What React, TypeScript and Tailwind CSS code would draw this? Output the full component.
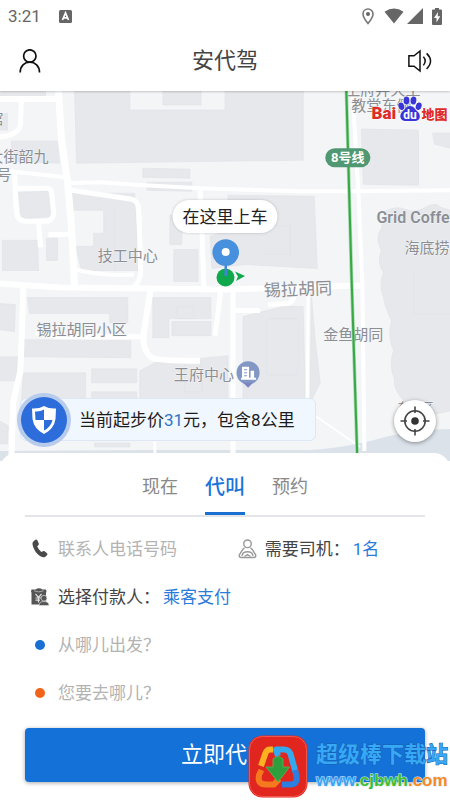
// src/App.tsx
import { useState } from 'react';

interface Building {
  id: string;
  points: string;
}

interface MapLabel {
  id: string;
  text: string;
  x: number;
  y: number;
  size: number;
  rotate?: number;
  bold?: boolean;
}

const buildings: Building[] = [
  { id: 'b1', points: '75,91 130,91 130,110 225,110 225,91 303,91 303,160 77,163' },
  { id: 'b2', points: '163,91 201,91 201,105 163,105' },
  { id: 'b3', points: '0,91 46,91 46,96 0,96' },
  { id: 'b4', points: '12,141 58,141 60,163 12,161' },
  { id: 'b5', points: '0,115 8,113 8,130 0,130' },
  { id: 'b6', points: '143,168 190,169 190,178 143,177' },
  { id: 'b7', points: '147,182 192,182 192,191 147,190' },
  { id: 'b8', points: '19,192 50,191 53,216 22,219' },
  { id: 'b9', points: '72,193 135,193 135,204 140,270 82,270 76,246 94,246 94,233 104,233 104,210 73,210' },
  { id: 'b10', points: '3,240 38,240 39,270 3,270' },
  { id: 'b11', points: '47,238 58,238 58,260 47,260' },
  { id: 'b12', points: '170,215 182,215 182,244 170,244' },
  { id: 'b13', points: '174,249 198,249 198,281 174,281' },
  { id: 'b14', points: '228,195 314,196 317,268 245,264 212,268 210,236 228,230' },
  { id: 'b15', points: '361,129 418,130 418,185 363,184' },
  { id: 'b16', points: '432,133 450,133 450,148 434,144' },
  { id: 'b17', points: '0,303 16,304 15,331 0,329' },
  { id: 'b18', points: '28,297 128,297 128,322 110,322 110,313 30,313' },
  { id: 'b19', points: '24,339 131,340 131,357 24,356' },
  { id: 'b20', points: '0,356 18,356 17,380 0,380' },
  { id: 'b21', points: '24,372 86,372 86,400 22,400' },
  { id: 'b22', points: '92,368 137,368 137,382 92,382' },
  { id: 'b23', points: '92,391 137,391 137,400 92,400' },
  { id: 'b24', points: '140,370 155,362 228,355 228,400 140,400' },
  { id: 'b25', points: '153,297 211,297 211,318 169,318 169,337 153,337' },
  { id: 'b26', points: '172,321 211,321 211,335 172,335' },
  { id: 'b27', points: '243,316 283,306 303,306 305,398 243,398' },
  { id: 'b28', points: '311,292 315,340 320,382 312,398 310,398' },
  { id: 'b29', points: '95,442 130,442 130,446 95,446' },
  { id: 'b30', points: '0,420 9,425 8,443 0,443' },
];

const roads: { id: string; d: string; width: number }[] = [
  { id: 'r1', d: 'M0 99H58', width: 6 },
  { id: 'r2', d: 'M22 100L21 124Q20 135 0 137', width: 5 },
  { id: 'r3', d: 'M59 91L62 140L68 182L71 215L73 245L75 287', width: 7 },
  { id: 'r4', d: 'M0 170L66 177M68 183L100 182L145 185L200 188L300 191L360 191L450 190', width: 4 },
  { id: 'r5', d: 'M72 190L132 199Q139 201 139 210L141 270Q141 280 134 287', width: 5 },
  { id: 'r6', d: 'M15 173L17 212Q18 221 27 221L47 221Q54 220 54 212L52 192Q51 187 44 188L16 188M39 221L41 247', width: 5 },
  { id: 'r7', d: 'M49 234H70', width: 5 },
  { id: 'r8', d: 'M200 188L202 230L204 288', width: 5 },
  { id: 'r9', d: 'M0 283L60 287L150 288L225 289L290 287L361 285', width: 6 },
  { id: 'r10', d: 'M24 286L21 370L14 400L12 455', width: 6 },
  { id: 'r11', d: 'M151 288L144 332Q142 350 152 357Q157 360 200 360', width: 6 },
  { id: 'r12', d: 'M36 332L60 336L142 336', width: 5 },
  { id: 'r13', d: 'M221 289L215 335', width: 5 },
  { id: 'r14', d: 'M233 289V455', width: 5 },
  { id: 'r15', d: 'M308 289L307 400M155 438V455', width: 3 },
  { id: 'r16', d: 'M234 310H260M268 304L287 303Q295 301 294 290', width: 5 },
  { id: 'r17', d: 'M352 91L358 190L362 285L364 450', width: 4 },
  { id: 'r18', d: 'M305 408L360 446', width: 2 },
  { id: 'r19', d: 'M72 268Q100 276 134 274', width: 4 },
];

const labels: MapLabel[] = [
  { id: 'l1', text: '大街韶九', x: -11, y: 162, size: 15 },
  { id: 'l2', text: '号', x: -3, y: 180, size: 15 },
  { id: 'l3', text: '馆', x: -11, y: 124, size: 15 },
  { id: 'l4', text: '技工中心', x: 98, y: 261, size: 15 },
  { id: 'l5', text: '锡拉胡同小区', x: 37, y: 334, size: 15 },
  { id: 'l6', text: '王府中心', x: 174, y: 379, size: 15 },
  { id: 'l7', text: '锡拉胡同', x: 264, y: 296, size: 17, rotate: -2 },
  { id: 'l8', text: '金鱼胡同', x: 323, y: 339, size: 15 },
  { id: 'l9', text: '王府井天主', x: 345, y: 95, size: 15 },
  { id: 'l10', text: '教堂东侧', x: 351, y: 111, size: 15 },
  { id: 'l11', text: 'Grid Coffee', x: 376, y: 223, size: 16, bold: true },
  { id: 'l12', text: '海底捞', x: 404, y: 253, size: 15 },
  { id: 'l13', text: '东一区', x: 397, y: 411, size: 12 },
];

const tabs = ['现在', '代叫', '预约'];

const StatusBar = () => {
  return (
    <div className="flex h-[30px] items-center justify-between px-2 pt-0.5 text-[#666]">
      <div className="flex items-center gap-[18px]">
        <span className="text-[17px] leading-5">3:21</span>
        <svg viewBox="0 0 13 13" className="size-[13px]">
          <rect width="13" height="13" rx="1.5" fill="#666" />
          <path d="M3.5 10L6.5 3L9.5 10M4.7 7.8H8.3" fill="none" stroke="#fff" strokeWidth="1.7" />
        </svg>
      </div>
      <div className="flex items-center">
        <svg viewBox="0 0 12 17" className="mr-[10px] h-[17px] w-3">
          <path d="M6 1C3 1 1 3.2 1 6C1 9.5 6 15.5 6 15.5S11 9.5 11 6C11 3.2 9 1 6 1Z" fill="none" stroke="#777" strokeWidth="1.6" />
          <circle cx="6" cy="6" r="2" fill="#666" />
        </svg>
        <svg viewBox="0 0 20 16" className="mr-[3px] h-4 w-5">
          <path d="M0.5 3.8Q10 -3 19.5 3.8L10 15.5Z" fill="#666" />
        </svg>
        <svg viewBox="0 0 16 16" className="mr-[9px] size-4">
          <path d="M16 0V16H0Z" fill="#666" />
        </svg>
        <svg viewBox="0 0 10 17" className="h-[17px] w-[10px]">
          <path d="M3 0H7V1.5H9Q10 1.5 10 2.5V16Q10 17 9 17H1Q0 17 0 16V2.5Q0 1.5 1 1.5H3Z" fill="#666" />
          <path d="M6 4L2 10H4.5V14.5L8.2 8.3H5.7Z" fill="#fff" />
        </svg>
      </div>
    </div>
  );
};

const Header = () => {
  return (
    <header className="relative z-10 bg-white shadow-[0_1px_2px_rgba(0,0,0,0.2)]">
      <StatusBar />
      <div className="flex h-[61px] items-center justify-between px-[18px]">
        <button aria-label="个人中心">
          <svg viewBox="0 0 24 24" className="size-6" fill="none" stroke="#111" strokeWidth="1.7">
            <circle cx="11.8" cy="7" r="6.2" />
            <path d="M2.2 23.5C2.2 17 6.5 13.2 11.8 13.2S21.5 17 21.5 23.5" />
          </svg>
        </button>
        <h1 className="text-[22px] leading-8 text-[#444]">安代驾</h1>
        <button aria-label="语音播报">
          <svg viewBox="0 0 24 24" className="size-6" fill="none" stroke="#111" strokeWidth="1.5">
            <path d="M0.9 6.8H6L12 2V22L6 17.2H0.9Z" />
            <path d="M15.4 7.8Q19 12 15.4 16.4" />
            <path d="M18.6 4.4Q26.5 12 18.6 20" />
          </svg>
        </button>
      </div>
    </header>
  );
};

const StreetMap = () => {
  return (
    <svg
      viewBox="0 91 450 369"
      preserveAspectRatio="xMidYMid slice"
      className="absolute inset-0 size-full"
    >
      <rect y="91" width="450" height="369" fill="#f3f5f7" />
      <g fill="#e6e8ec" stroke="#dfe2e6" strokeWidth="0.6">
        {buildings.map((building) => (
          <polygon key={building.id} points={building.points} />
        ))}
        <path d="M385 211Q395 205 405 209T425 207T440 207L450 210V410L430 414L405 402Q392 388 394 378Q388 365 393 350Q387 335 391 320Q384 306 383 296Q378 285 383 272Q376 262 381 250Q374 238 381 228Z" />
        <path d="M267 318H298V374H267ZM177 306H194V318H177ZM413 270V314H450M260 205L270 225L290 226V254H263M115 208V270M185 362V391H202V362" fill="none" />
      </g>
      <path d="M0 450L150 449H310Q335 448 370 440Q410 428 450 428V460H0Z" fill="#dbe2e9" />
      <g fill="none" stroke="#fff" strokeLinejoin="round">
        {roads.map((road) => (
          <path key={road.id} d={road.d} strokeWidth={road.width} />
        ))}
      </g>

      <g fill="#8b8e93" stroke="#f5f6f8" strokeWidth="1" paintOrder="stroke">
        {labels.map((label) => (
          <text
            key={label.id}
            x={label.x}
            y={label.y}
            fontSize={label.size}
            fontWeight={label.bold ? 600 : 400}
            transform={`rotate(${label.rotate ?? 0} ${label.x} ${label.y})`}
          >
            {label.text}
          </text>
        ))}
      </g>

      <path d="M346 91L351 270L357 460" fill="none" stroke="#a5d8ae" strokeWidth="3.5" />
      <path d="M346 91L351 270L357 460" fill="none" stroke="#36a844" strokeWidth="2" />
      <rect x="325" y="148" width="45" height="19" rx="9.5" fill="#4f9872" />
      <text x="347.5" y="162" fontSize="13" fontWeight="700" fill="#fff" textAnchor="middle">
        8号线
      </text>

      <circle cx="248" cy="372" r="11.5" fill="#8297c4" />
      <path d="M243 382L248 387L253 382Z" fill="#7b85c4" />
      <path d="M242 366H249V378H242ZM250.5 370H254V378H250.5ZM241 377H256V379H241Z" fill="#fff" />
      <path d="M244 369H247M244 372H247M244 375H247" stroke="#8297c4" strokeWidth="1" />

      <g fontWeight="900" fill="#e02b2b" stroke="#fff" strokeWidth="1" paintOrder="stroke">
        <text x="371" y="119" fontSize="17">Bai</text>
        <text x="421" y="119" fontSize="13">地图</text>
      </g>
      <g fill="#3a35d6" stroke="#fff" strokeWidth="1" paintOrder="stroke">
        <path d="M409.5 106C405.5 106 404.5 109.5 401.5 112C398.5 115 399.5 121 405 121H414.500C420 121 420.5 115 417.5 112C414.5 109.5 413.5 106 409.5 106Z" />
        <ellipse cx="400.8" cy="106.2" rx="2.9" ry="3.8" transform="rotate(-15 401 106)" />
        <ellipse cx="406" cy="100.5" rx="2.9" ry="4" />
        <ellipse cx="413" cy="100.5" rx="2.9" ry="4" transform="rotate(8 413 100)" />
        <ellipse cx="418.2" cy="106.2" rx="2.9" ry="3.8" transform="rotate(15 418 106)" />
      </g>
      <text x="409.5" y="119" fontSize="12" fontWeight="700" fill="#fff" textAnchor="middle">
        du
      </text>
    </svg>
  );
};

const PickupPin = () => {
  return (
    <div className="absolute top-[109px] left-1/2 flex -translate-x-1/2 flex-col items-center">
      <button className="h-[33px] rounded-full bg-white px-[10px] text-[17px] leading-6 whitespace-nowrap text-[#222] shadow-[0_0_3px_rgba(0,0,0,0.2)]">
        在这里上车
      </button>
      <svg viewBox="0 0 42 52" className="mt-1.5 h-[52px] w-[42px]">
        <circle cx="21" cy="38.500" r="9" fill="#0fa84d" />
        <path d="M30.500 32.500L40.500 37L31.500 42L33.500 37.500Z" fill="#0fa84d" />
        <path d="M20 25H22.500V37H20Z" fill="#3f86d8" />
        <circle cx="21.200" cy="13.500" r="13.300" fill="#4790de" />
        <circle cx="21.200" cy="13" r="4" fill="#fff" />
      </svg>
    </div>
  );
};

const PriceBanner = () => {
  return (
    <div className="absolute bottom-5 left-5 flex h-[43px] items-center rounded-md border border-[#dde8f2] bg-[#f0f7fe] pr-5">
      <span className="-ml-1 flex size-[54px] items-center justify-center rounded-full bg-[#b7cbed]">
        <span className="flex size-[46px] items-center justify-center rounded-full bg-[#2c6ddb]">
          <svg viewBox="0 0 26 30" className="h-[30px] w-[26px]">
            <path d="M13 1Q18 4 25 3.500L24.500 14Q23 24 13 29Q3 24 1.500 14L1 3.500Q8 4 13 1Z" fill="#fff" />
            <path d="M13 4.500V15H4.500L4 6.500Q9 7 13 4.500ZM13 15H21.500Q20 22 13 25.500Z" fill="#2c6ddb" />
          </svg>
        </span>
      </span>
      <p className="ml-2 text-[17px] leading-6 whitespace-nowrap text-[#1c1c1c]">
        当前起步价<span className="text-[#2f74c8]">31</span>元，包含8公里
      </p>
    </div>
  );
};

const LocateButton = () => {
  return (
    <button
      aria-label="定位"
      className="absolute right-[14px] bottom-[19px] flex size-[42px] items-center justify-center rounded-full bg-white shadow-[0_1px_4px_rgba(0,0,0,0.4)]"
    >
      <svg viewBox="0 0 30 30" className="size-[30px]" fill="none" stroke="#444" strokeWidth="1.6">
        <circle cx="15" cy="15" r="10.200" />
        <path d="M15 0.500V7M15 23V29.500M0.500 15H7M23 15H29.500" />
        <circle cx="15" cy="15" r="3.800" fill="#333" stroke="none" />
      </svg>
    </button>
  );
};

const PhoneIcon = () => (
  <svg viewBox="0 0 20 20" className="size-5 shrink-0">
    <path
      d="M3.600 2.200L5.700 0.500Q6.700 0.200 7.300 1.200L8.800 4.600Q9.200 5.600 8.300 6.200L7.200 7.200Q8.500 10.800 11.300 13L12.900 12.200Q13.700 11.800 14.600 12.300L17 14.300Q17.800 15 17.200 15.900L15.300 17.800Q14.200 18.800 12.300 18C7 16 3.400 10.500 2.500 5.200Q2.200 3.300 3.600 2.200Z"
      fill="#4a4a4a"
    />
  </svg>
);

const DriverIcon = () => (
  <svg viewBox="0 0 20 20" className="size-5 shrink-0" fill="none" stroke="#999" strokeWidth="1.400">
    <circle cx="10.500" cy="4.800" r="3.800" />
    <path d="M7.500 9Q5.500 10 4.200 13L2.500 15.500Q1.500 18.500 4.500 18.500H16.500Q19.500 18.500 18.500 15.500L16.800 13Q15.500 10 13.500 9" />
    <path d="M5 16.800Q5.500 12.800 10.500 12.800T16 16.800M7.500 17.500L10.500 15.500L13.500 17.500" />
  </svg>
);

const PayerIcon = () => (
  <svg viewBox="0 0 20 20" className="size-5 shrink-0">
    <path d="M1.500 2.500H5.500Q9 0 12.500 2.500H16Q17 4 16 6V17.500H1.500V6Q0.500 4 1.500 2.500Z" fill="#555" />
    <path d="M4 3.800Q8.800 6 13.500 3.800" fill="none" stroke="#aaa" />
    <path d="M5.500 7L8.500 10.500L11.500 7M5.500 11H11M5.500 13.200H10M8.500 10.500V15.500" fill="none" stroke="#ddd" strokeWidth="1.200" />
    <circle cx="14" cy="11.200" r="2.900" fill="#555" stroke="#ddd" strokeWidth="0.700" />
    <path d="M9 18.500Q9 14.500 14 14.500T19 18.500Z" fill="#555" stroke="#ddd" strokeWidth="0.700" />
  </svg>
);

const Watermark = () => {
  return (
    <div className="absolute right-0.5 bottom-0.5 flex items-center gap-2">
      <svg viewBox="0 0 60 64" className="h-16 w-[60px]">
        <rect x="0.500" y="0.500" width="59" height="62" rx="14" fill="#e0261f" />
        <rect x="1.500" y="1.500" width="57" height="60" rx="13" fill="none" stroke="#f2564a" />
        <g fill="none" strokeWidth="6" strokeLinejoin="round">
          <path d="M25 14.500H22Q19 14.500 17.500 18L13 31" stroke="#ffb21f" />
          <path d="M13.500 35L11 40Q9 49.500 18 49.500H26L31 44" stroke="#f5791e" />
          <path d="M30 21L28 14.500H36Q41 14.500 42.500 19L47.500 37" stroke="#35a9ee" />
          <path d="M47 35L48.500 41Q50 49.500 42 49.500H34" stroke="#2b7fe0" />
        </g>
        <path d="M25 24Q30 19 35 24V32H41.500L30 47L18 32H25Z" fill="#2f9e3c" stroke="#58b95c" strokeWidth="0.800" />
      </svg>
      <div className="flex flex-col font-bold whitespace-nowrap">
        <span className="text-[22px] leading-7 text-[#36a8f5] [-webkit-text-stroke:1px_#1560b0] [paint-order:stroke_fill]">
          超级棒下载站
        </span>
        <span className="font-['Liberation_Sans',sans-serif] text-[17px] leading-6 text-[#3aa5f5] [-webkit-text-stroke:1px_#d7ecff] [paint-order:stroke_fill]">
          www<span className="text-[#3fbf2f]">.cjbwh</span>
          <span className="text-[#f98a1f]">.com</span>
        </span>
      </div>
    </div>
  );
};

const OrderSheet = () => {
  const [activeTab, setActiveTab] = useState('代叫');

  return (
    <section className="relative z-10 -mt-2 rounded-t-2xl bg-white px-[25px] pt-2 pb-[19px] text-[17px] leading-6 text-[#444]">
      <div className="flex h-14 justify-center gap-[27px] border-b-2 border-[#e3e5e8]">
        {tabs.map((tab) => (
          <button
            key={tab}
            onClick={() => setActiveTab(tab)}
            className={
              tab === activeTab
                ? 'border-b-3 border-[#1a6fd0] text-[20px] font-medium text-[#1a73d9]'
                : 'border-b-3 border-transparent text-[18px] text-[#888]'
            }
          >
            {tab}
          </button>
        ))}
      </div>

      <form className="pt-2" onSubmit={(e) => e.preventDefault()}>
        <div className="flex h-12 items-center px-[5px]">
          <label className="flex min-w-0 flex-1 items-center gap-2">
            <PhoneIcon />
            <input
              type="tel"
              aria-label="联系人电话号码"
              placeholder="联系人电话号码"
              className="w-full min-w-0 outline-none placeholder:text-[#b3b3b3]"
            />
          </label>
          <div className="flex w-[47%] items-center">
            <DriverIcon />
            <span className="ml-2">需要司机：</span>
            <button type="button" className="ml-[3px] text-[#2b7bd9]">
              1名
            </button>
          </div>
        </div>

        <div className="flex h-12 items-center px-[5px]">
          <PayerIcon />
          <span className="ml-2">选择付款人：</span>
          <button type="button" className="ml-[3px] text-[#2b7bd9]">
            乘客支付
          </button>
        </div>

        <label className="flex h-12 items-center gap-2 px-[5px]">
          <span className="flex w-5 justify-center">
            <span className="size-[10px] rounded-full bg-[#1a6fd4]" />
          </span>
          <input
            type="text"
            aria-label="出发地"
            placeholder="从哪儿出发？"
            className="min-w-0 flex-1 outline-none placeholder:text-[#b3b3b3]"
          />
        </label>

        <label className="flex h-12 items-center gap-2 px-[5px]">
          <span className="flex w-5 justify-center">
            <span className="size-[10px] rounded-full bg-[#f26419]" />
          </span>
          <input
            type="text"
            aria-label="目的地"
            placeholder="您要去哪儿？"
            className="min-w-0 flex-1 outline-none placeholder:text-[#b3b3b3]"
          />
        </label>

        <button
          type="submit"
          className="mt-[11px] h-[54px] w-full rounded bg-[#1471d8] text-[22px] leading-8 text-white shadow-[0_1px_4px_rgba(0,0,0,0.35)]"
        >
          立即代叫
        </button>
      </form>

      <Watermark />
    </section>
  );
};

const App = () => {
  return (
    <div className="flex min-h-screen flex-col bg-white font-[Roboto,'Noto_Sans_CJK_SC',sans-serif]">
      <Header />
      <main className="flex flex-1 flex-col">
        <div className="relative min-h-[320px] flex-1 overflow-hidden">
          <StreetMap />
          <PickupPin />
          <PriceBanner />
          <LocateButton />
        </div>
        <OrderSheet />
      </main>
    </div>
  );
};

export default App;
